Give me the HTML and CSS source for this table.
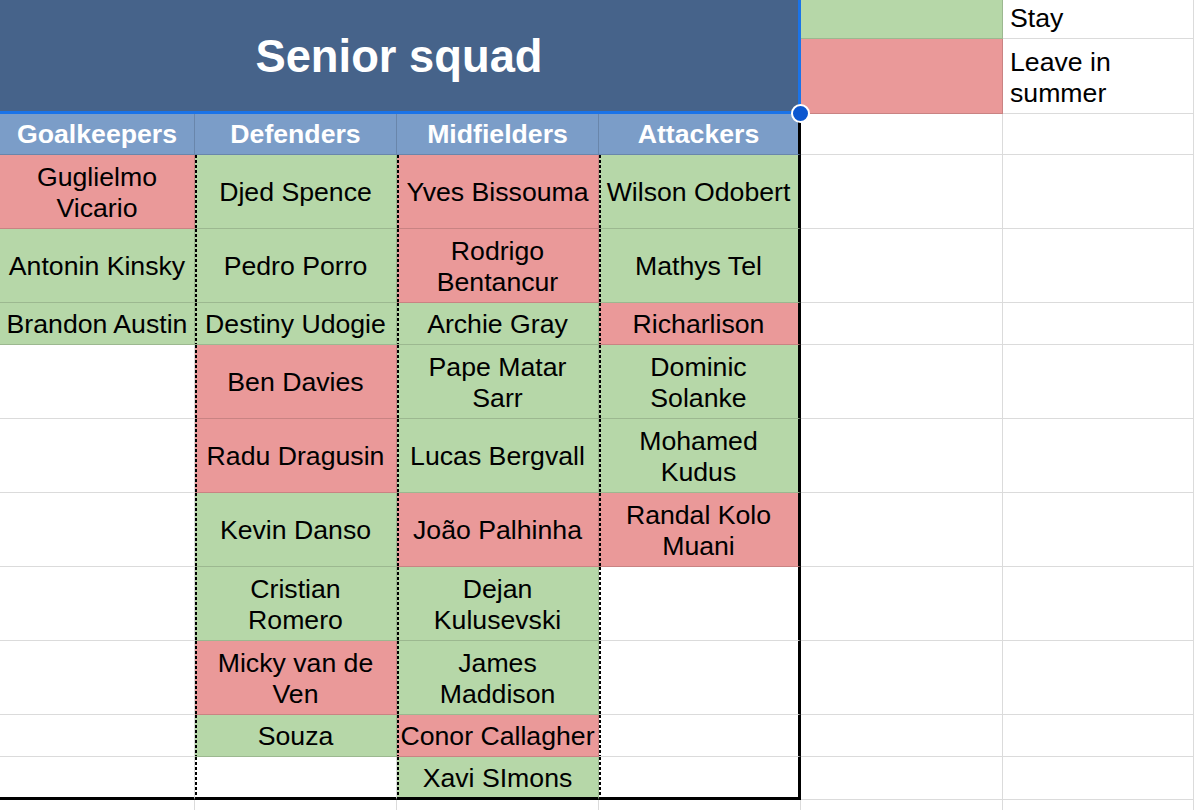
FILE: index.html
```html
<!DOCTYPE html>
<html lang="en">
<head>
<meta charset="utf-8">
<title>Senior squad</title>
<link rel="stylesheet" href="styles.css">
</head>
<body>
<div class="sheet">
  <div class="cell title">Senior squad<span class="handle"></span></div>
  <div class="cell g"></div>
  <div class="cell leg">Stay</div>
  <div class="cell r"></div>
  <div class="cell leg">Leave in<br>summer</div>

  <div class="cell hdr">Goalkeepers</div>
  <div class="cell hdr">Defenders</div>
  <div class="cell hdr">Midfielders</div>
  <div class="cell hdr edge">Attackers</div>
  <div class="cell"></div>
  <div class="cell"></div>

  <div class="cell r">Guglielmo<br>Vicario</div>
  <div class="cell g dot">Djed Spence</div>
  <div class="cell r dot">Yves Bissouma</div>
  <div class="cell g dot edge">Wilson Odobert</div>
  <div class="cell"></div>
  <div class="cell"></div>

  <div class="cell g">Antonin Kinsky</div>
  <div class="cell g dot">Pedro Porro</div>
  <div class="cell r dot">Rodrigo<br>Bentancur</div>
  <div class="cell g dot edge">Mathys Tel</div>
  <div class="cell"></div>
  <div class="cell"></div>

  <div class="cell g">Brandon Austin</div>
  <div class="cell g dot">Destiny Udogie</div>
  <div class="cell g dot">Archie Gray</div>
  <div class="cell r dot edge">Richarlison</div>
  <div class="cell"></div>
  <div class="cell"></div>

  <div class="cell"></div>
  <div class="cell r dot">Ben Davies</div>
  <div class="cell g dot">Pape Matar<br>Sarr</div>
  <div class="cell g dot edge">Dominic<br>Solanke</div>
  <div class="cell"></div>
  <div class="cell"></div>

  <div class="cell"></div>
  <div class="cell r dot">Radu Dragusin</div>
  <div class="cell g dot">Lucas Bergvall</div>
  <div class="cell g dot edge">Mohamed<br>Kudus</div>
  <div class="cell"></div>
  <div class="cell"></div>

  <div class="cell"></div>
  <div class="cell g dot">Kevin Danso</div>
  <div class="cell r dot">João Palhinha</div>
  <div class="cell r dot edge">Randal Kolo<br>Muani</div>
  <div class="cell"></div>
  <div class="cell"></div>

  <div class="cell"></div>
  <div class="cell g dot">Cristian<br>Romero</div>
  <div class="cell g dot">Dejan<br>Kulusevski</div>
  <div class="cell dot edge"></div>
  <div class="cell"></div>
  <div class="cell"></div>

  <div class="cell"></div>
  <div class="cell r dot">Micky van de<br>Ven</div>
  <div class="cell g dot">James<br>Maddison</div>
  <div class="cell dot edge"></div>
  <div class="cell"></div>
  <div class="cell"></div>

  <div class="cell"></div>
  <div class="cell g dot">Souza</div>
  <div class="cell r dot">Conor Callagher</div>
  <div class="cell dot edge"></div>
  <div class="cell"></div>
  <div class="cell"></div>

  <div class="cell last"></div>
  <div class="cell dot last"></div>
  <div class="cell g dot last">Xavi SImons</div>
  <div class="cell dot edge last"></div>
  <div class="cell"></div>
  <div class="cell"></div>

  <div class="cell"></div>
  <div class="cell"></div>
  <div class="cell"></div>
  <div class="cell"></div>
  <div class="cell"></div>
  <div class="cell"></div>
</div>
</body>
</html>
```

FILE: styles.css
```css
html, body {
  margin: 0;
  padding: 0;
  overflow: hidden;
  background: #ffffff;
}

.sheet {
  display: grid;
  width: 1194px;
  grid-template-columns: 195px 202px 202px 202px 202px 1fr;
  grid-template-rows: 39px 75px 41px 74px 74px 42px 74px 74px 74px 74px 74px 42px 43px 40px;
  font-family: "Liberation Sans", Arial, sans-serif;
  font-size: 26.67px;
  line-height: 31px;
  color: #000000;
}

.cell {
  box-sizing: border-box;
  display: flex;
  align-items: center;
  justify-content: center;
  text-align: center;
  padding: 2px 2px 0;
  border-right: 1px solid rgba(0, 0, 0, 0.14);
  border-bottom: 1px solid rgba(0, 0, 0, 0.14);
  white-space: nowrap;
  min-width: 0;
}

.g {
  background-color: #b6d7a8;
}

.r {
  background-color: #ea9999;
}

.dot {
  background-image: repeating-linear-gradient(to bottom, #000000 0 3px, transparent 3px 5px);
  background-size: 2px 100%;
  background-repeat: no-repeat;
  background-position: left top;
}

.title {
  grid-column: 1 / 5;
  grid-row: 1 / 3;
  position: relative;
  padding: 2px 0 0;
  background-color: #46638a;
  color: #ffffff;
  font-weight: bold;
  font-size: 45.33px;
  line-height: 52px;
  border-right: 3px solid #1a73e8;
  border-bottom: 3px solid #1a73e8;
}

.handle {
  position: absolute;
  right: -12px;
  bottom: -12px;
  width: 15px;
  height: 15px;
  border: 2px solid #ffffff;
  border-radius: 50%;
  background: #0b57d0;
  z-index: 2;
}

.hdr {
  background-color: #7b9dc8;
  color: #ffffff;
  font-weight: bold;
  padding-top: 0;
}

.leg {
  justify-content: flex-start;
  align-items: flex-end;
  text-align: left;
  padding: 0 4px 4px 7px;
}

.edge {
  border-right: 3px solid #000000;
}

.last {
  border-bottom: 3px solid #000000;
}
```
